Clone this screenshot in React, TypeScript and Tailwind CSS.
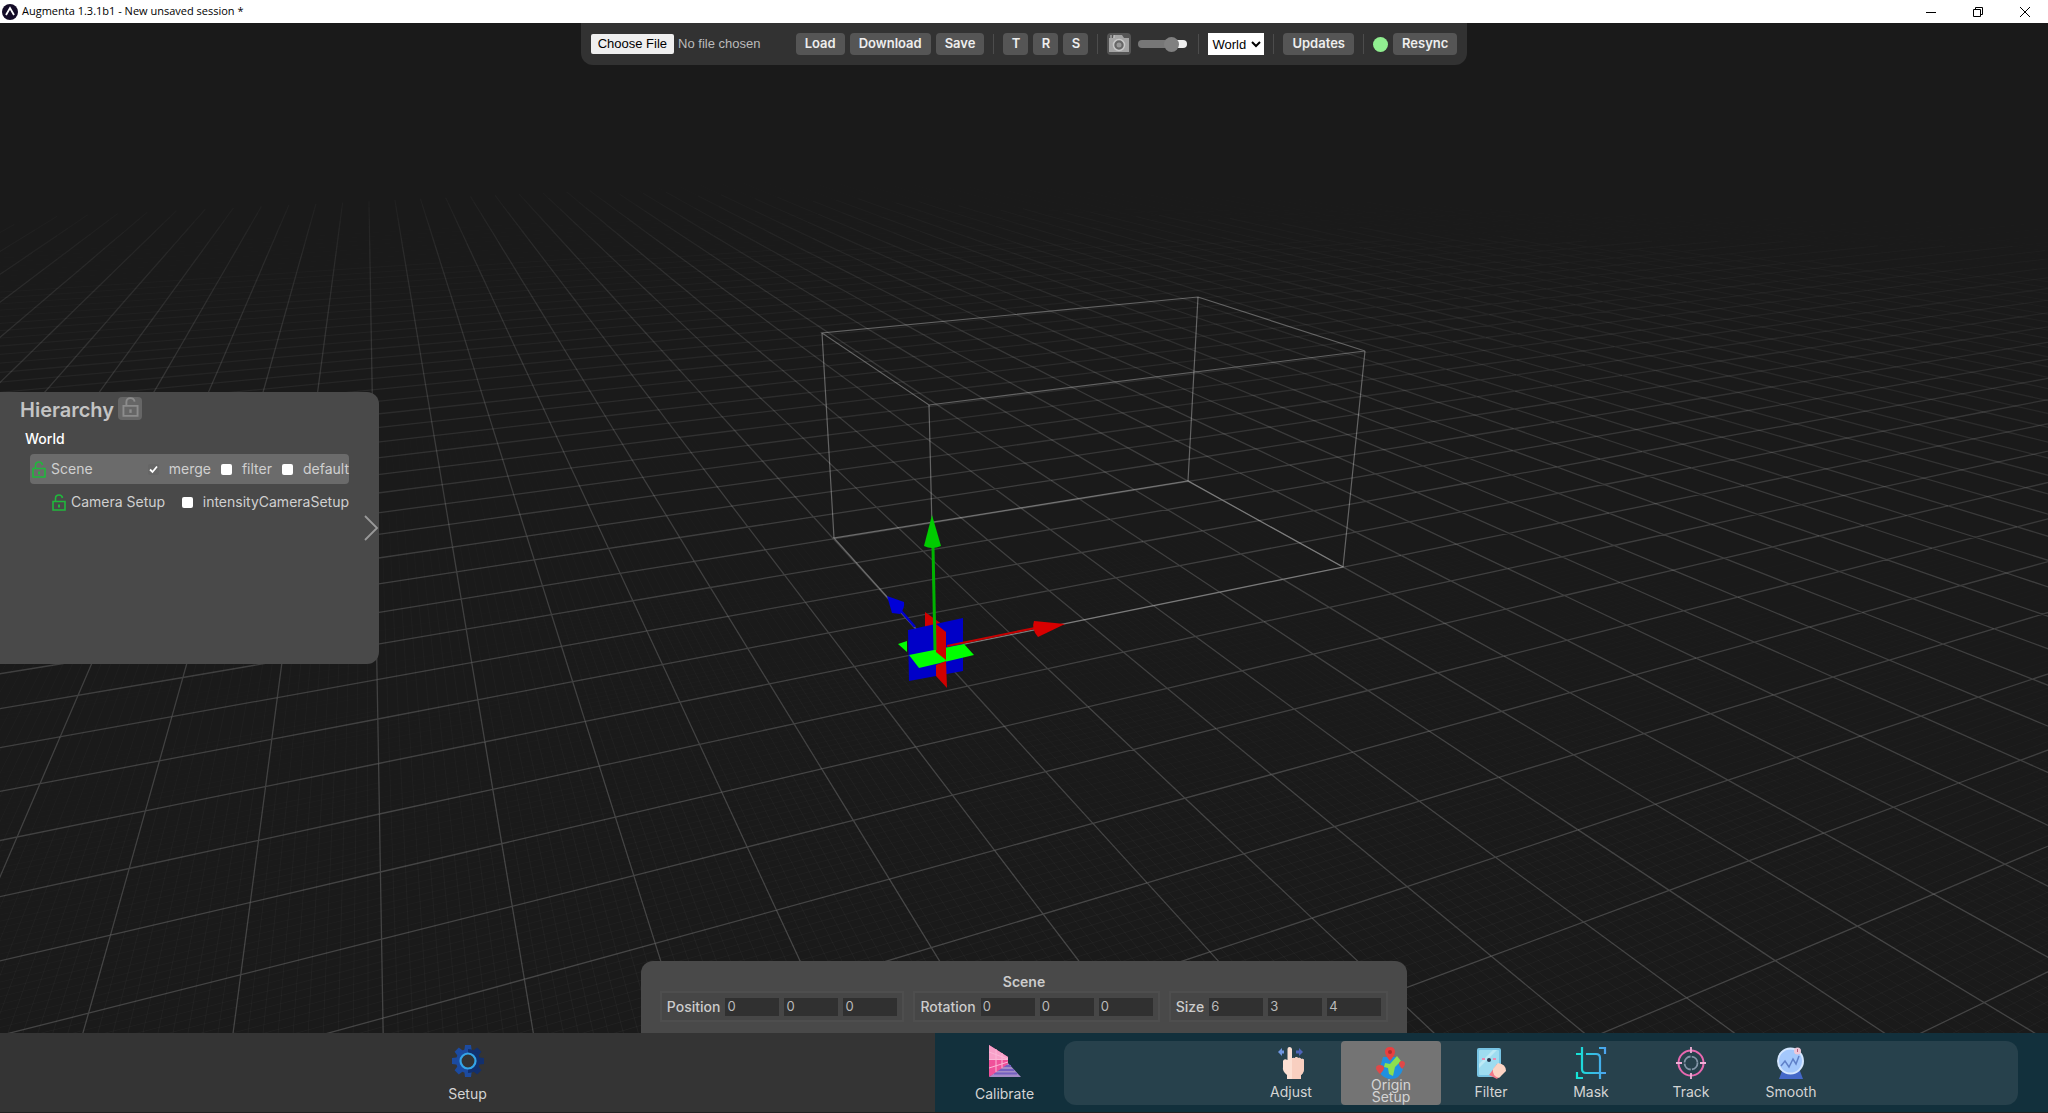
import { useState } from 'react';
import type { ReactNode } from 'react';

// Ground plane projection: x/z in metres -> screen, with the horizon at y = 26
const HORIZON = 26;
const CENTER = 1024;
const depth = (x: number, z: number) => 0.001602 + 0.000041 * x + 0.000087 * z;
const side = (x: number, z: number) => -0.1426 + 0.1221 * x - 0.05725 * z;

const project = (x: number, z: number) => {
  const q = depth(x, z);
  return { q, px: CENTER + side(x, z) / q, py: HORIZON + 1 / q };
};

const distance = (x: number, z: number) => {
  const f = 1398 * depth(x, z) - 0.3876;
  return Math.hypot(side(x, z), f) / 0.13486;
};

const LEVELS = 24;

const buildGrid = (unit: number, extent: number, chunk: number, fade: number, softGap: number) => {
  const levels: string[] = Array(LEVELS).fill('');
  const count = Math.round(extent / unit);
  for (const dir of [0, 1]) {
    for (let i = -count; i <= count; i++) {
      const c = i * unit;
      if (unit < 1 && i % 10 === 0) continue;
      for (let t = -extent; t < extent; t += chunk) {
        const at = (v: number, off = 0) => (dir ? project(v, c + off) : project(c + off, v));
        let a = at(t);
        let b = at(t + chunk);
        if (b.q < 0.0008) continue;
        if (a.q < 0.0008) a = at(t + (chunk * (0.0008 - a.q)) / (b.q - a.q));
        if (Math.max(a.px, b.px) < -10 || Math.min(a.px, b.px) > 2060) continue;
        if (Math.min(a.py, b.py) > 1050) continue;
        const mid = t + chunk / 2;
        const n = at(mid, unit);
        const m = at(mid);
        const len = Math.hypot(b.px - a.px, b.py - a.py) || 1;
        // screen gap to the neighbouring line, dims lines that get crowded
        const gap = Math.abs((n.px - m.px) * (b.py - a.py) - (n.py - m.py) * (b.px - a.px)) / len;
        const d = dir ? distance(mid, c) : distance(c, mid);
        const o = Math.max(0, 1 - d / fade) * Math.min(1, gap / softGap);
        const level = Math.min(LEVELS - 1, Math.floor(o * LEVELS));
        if (level < 1) continue;
        levels[level] += `M${a.px.toFixed(1)} ${a.py.toFixed(1)}L${b.px.toFixed(1)} ${b.py.toFixed(1)}`;
      }
    }
  }
  return levels;
};

const majorGrid = buildGrid(1, 50, 2, 72, 22);
const minorGrid = buildGrid(0.1, 14, 2, 32, 9);

const Scene = () => (
  <svg className="absolute inset-0 h-full w-full" viewBox="0 23 2048 1010" preserveAspectRatio="xMidYMid slice" fill="none">
    {minorGrid.map((d, i) => d && <path key={i} d={d} stroke="#fff" strokeOpacity={(i / LEVELS) * 0.045} />)}
    {majorGrid.map((d, i) => d && <path key={i} d={d} stroke="#fff" strokeWidth="1.3" strokeOpacity={(i / LEVELS) * 0.22} />)}
    <g stroke="#fff" strokeOpacity="0.32" strokeWidth="1.2">
      <path d="M935 650L1343 567L1188 481L834 538Z" />
      <path d="M929 405L1365 351L1198 297L822 333Z" />
      <path d="M935 650L929 405M1343 567L1365 351M1188 481L1198 297M834 538L822 333" />
    </g>
    {/* transform gizmo */}
    <path d="M925 612V633L946 652V627Z" fill="#d00000" />
    <path d="M908 630L963 618V671L909 681Z" fill="#0000c8" />
    <path d="M898 644L907 641V652Z" fill="#0f0" />
    <path d="M909 655L964 644L974 655L919 668Z" fill="#0f0" />
    <path d="M936 624L946 632V660L936 652Z" fill="#d00000" />
    <path d="M936 665L946 661L947 688L936 676Z" fill="#d00000" />
    <path d="M915 627L901 611" stroke="#0000c8" strokeWidth="2.5" />
    <path d="M887 596L904 602Q905 608 900 614L892 613Z" fill="#0000d8" />
    <path d="M947 646L1035 628" stroke="#c80000" strokeWidth="2" />
    <path d="M1065 624L1034 621Q1031 629 1038 637Z" fill="#d80000" />
    <path d="M935 650L933 546" stroke="#00b400" strokeWidth="3" />
    <path d="M932 515L924 546Q932 550 941 546Z" fill="#00cc00" />
  </svg>
);

const Lock = ({ className }: { className: string }) => (
  <svg className={className} viewBox="0 0 14 17" fill="none" stroke="currentColor" strokeWidth="1.6">
    <path d="M1 7.5H13V16H1ZM3.5 7.5V4.5Q3.5 1 7 1Q10 1 10.5 4" />
    <path d="M7 10.5V13.5" strokeWidth="2" />
  </svg>
);

const GearIcon = () => (
  <svg viewBox="0 0 32 32" className="size-8">
    {[0, 45, 90, 135, 180, 225, 270, 315].map((a) => (
      <path key={a} d="M13 0H19L20 8H12Z" fill={a > 0 && a < 180 ? '#12306e' : '#1c4ba0'} transform={`rotate(${a} 16 16)`} />
    ))}
    <path d="M16 4A12 12 0 0 0 16 28Z" fill="#1c4ba0" />
    <path d="M16 4A12 12 0 0 1 16 28Z" fill="#12306e" />
    <circle cx="16" cy="16" r="7.5" fill="#333" stroke="#35a5e8" strokeWidth="2.2" />
  </svg>
);

const CalibrateIcon = () => (
  <svg viewBox="0 0 32 32" className="size-8">
    <path d="M0 32L18 17L32 32Z" fill="#a48cc8" />
    <path d="M8 25H25M13 21H22M5 28.5H28" stroke="#7560c0" strokeWidth="1.8" />
    <path d="M0 0L19 12V19L0 32Z" fill="#f0509a" />
    <path d="M0 0L19 12V15L0 14Z" fill="#f8a0c8" />
    <path d="M0 7L19 14M0 14.5H19M0 23L19 17M7 4V27M13 8V23" stroke="#fbb6d6" strokeWidth="1" />
  </svg>
);

const AdjustIcon = () => (
  <svg viewBox="0 0 32 32" className="size-8">
    <path d="M3 5L7 1V3.5H9V6.5H7V9Z" fill="#6f96e0" />
    <path d="M28 5L24 1V3.5H21V6.5H24V9Z" fill="#4f64b8" />
    <path d="M12.5 2Q12.5 0 14.5 0T17 2V12Q18 10 20 11Q21 9 23 11Q25 10 26 12Q29 11 29 14V21Q29 26 26 28V32H12V28Q7 24 8 20V14Q9 11 12.5 13Z" fill="#fce0d4" />
    <path d="M17 11V32H26V28Q29 26 29 21V14Q29 11 26 12Q25 10 23 11Q21 9 20 11Z" fill="#f8cfc0" />
  </svg>
);

const OriginIcon = () => (
  <svg viewBox="0 0 32 32" className="size-8">
    <path d="M8 10H22L28 22Q25 32 16 32Q8 32 4 24Z" fill="#2090e0" />
    <path d="M10 16L15 17L22 9L26 14L20 20L18 29L14 27L13 21L9 20Z" fill="#8be04e" />
    <path d="M15 14Q10 8 10 5Q10 0 15 0T20 5Q20 8 15 14Z" fill="#e84040" />
    <circle cx="15" cy="5" r="2" fill="#b02c30" />
    <path d="M5 27Q1 23 1 21Q1 18 5 18T9 21Q9 23 5 27ZM27 22Q24 19 24 17Q24 14 27 14T30 17Q30 19 27 22Z" fill="#e04848" />
  </svg>
);

const FilterIcon = () => (
  <svg viewBox="0 0 32 32" className="size-8">
    <rect x="2" y="1" width="24" height="29" rx="2" fill="#78c4e4" />
    <rect x="4" y="3" width="20" height="25" rx="1" fill="#9edcf0" />
    <path d="M4 17L18 3H22L4 21Z" fill="#bdeaf6" />
    <circle cx="14" cy="13" r="2" fill="#263850" />
    <path d="M7 12H10M18 12H21" stroke="#e88cb4" strokeWidth="2" />
    <path d="M14 28L22 17L30 23L22 32Z" fill="#f07888" />
    <path d="M18 22L23 16Q31 17 31 24L24 31Q17 29 18 22Z" fill="#fcd4c4" />
  </svg>
);

const MaskIcon = () => (
  <svg viewBox="0 0 32 32" className="size-8" fill="none" strokeWidth="2.2">
    <defs>
      <linearGradient id="mask" gradientUnits="userSpaceOnUse" x1="0" y1="0" x2="32" y2="0">
        <stop stopColor="#10e8d4" />
        <stop offset="1" stopColor="#50a0f0" />
      </linearGradient>
    </defs>
    <path d="M7 0V22Q7 26 11 26H31M1 7H7M11 7H21Q25 7 25 11V32M24 1H30V7M2 25V31H8" stroke="url(#mask)" />
  </svg>
);

const TrackIcon = () => (
  <svg viewBox="0 0 32 32" className="size-8" fill="none">
    <circle cx="16" cy="16" r="12.5" stroke="#e868b0" strokeWidth="2" />
    <circle cx="16" cy="16" r="6.5" stroke="#8496a8" strokeWidth="1.8" strokeDasharray="9 1.2" />
    <path d="M16 0V6M16 26V32M1 16H7M25 16H31" stroke="#f0b0d8" strokeWidth="1.8" />
  </svg>
);

const SmoothIcon = () => (
  <svg viewBox="0 0 32 32" className="size-8">
    <path d="M7 24H25L28 32H4Z" fill="#4468c8" />
    <circle cx="15.5" cy="14" r="12.5" fill="#a4c8fc" stroke="#d4e6fe" strokeWidth="2" />
    <path d="M6 19L10 14L14 20L18 12L21 17L24 9" fill="none" stroke="#6080c8" strokeWidth="1.5" />
    <circle cx="22.5" cy="4" r="3.5" fill="#f0c8d8" />
    <path d="M22.5 2V5" stroke="#b86080" />
  </svg>
);

const Separator = () => <span className="mx-1 h-5 w-px bg-[#4c4c4c]" />;

const ToolButton = ({ children, className = 'px-[9px]' }: { children: ReactNode; className?: string }) => (
  <button className={`h-[22px] rounded bg-[#555] text-[13px] font-semibold text-[#eee] ${className}`}>{children}</button>
);

const Toolbar = () => {
  const [opacity, setOpacity] = useState(75);

  return (
    <div className="flex h-[42px] items-center gap-[5px] rounded-b-xl bg-[#323232] px-2.5">
      <input
        type="file"
        aria-label="Session file"
        className="mr-0.5 w-[198px] font-['Liberation_Sans',sans-serif] text-[13px] text-[#bbb] file:mr-1 file:h-5 file:rounded-xs file:bg-[#efefef] file:px-[7px] file:text-[13px] file:text-black"
      />
      <ToolButton>Load</ToolButton>
      <ToolButton>Download</ToolButton>
      <ToolButton>Save</ToolButton>
      <Separator />
      <ToolButton className="w-[25px]">T</ToolButton>
      <ToolButton className="w-[25px]">R</ToolButton>
      <ToolButton className="w-[25px]">S</ToolButton>
      <Separator />
      <button aria-label="Camera" className="flex h-[22px] w-6 items-center justify-center rounded bg-[#555]">
        <svg viewBox="0 0 22 20" className="h-5 w-[22px]">
          <path d="M1 4H5L6 1H14L16 4H21V18H1Z" fill="#a4a4a4" />
          <path d="M3 1V4M6 1V4" stroke="#ccc" />
          <circle cx="11" cy="11" r="5.5" fill="#666" stroke="#c8c8c8" strokeWidth="1.5" />
          <circle cx="11" cy="11" r="2.5" fill="#999" />
        </svg>
      </button>
      <input
        type="range"
        aria-label="Camera opacity"
        value={opacity}
        onChange={(e) => setOpacity(Number(e.target.value))}
        className="mx-0.5 h-2 w-[49px] appearance-none rounded-full bg-linear-to-r from-[#777] from-75% to-[#efefef] to-75% [&::-webkit-slider-thumb]:size-[15px] [&::-webkit-slider-thumb]:appearance-none [&::-webkit-slider-thumb]:rounded-full [&::-webkit-slider-thumb]:bg-[#808080]"
      />
      <Separator />
      <select aria-label="Space" className="h-[22px] w-14 bg-white font-['Liberation_Sans',sans-serif] text-[13px] text-black">
        <option>World</option>
        <option>Local</option>
      </select>
      <Separator />
      <ToolButton>Updates</ToolButton>
      <Separator />
      <span className="size-[15px] rounded-full bg-[#90ee90]" />
      <ToolButton>Resync</ToolButton>
    </div>
  );
};

const Check = ({ id, label, checked = false }: { id: string; label: string; checked?: boolean }) => (
  <label htmlFor={id} className="flex items-center gap-2.5 whitespace-nowrap">
    <span className="relative flex">
      <input id={id} type="checkbox" defaultChecked={checked} className="peer size-[11px] appearance-none rounded-xs bg-white checked:bg-[#666]" />
      <svg viewBox="0 0 11 11" className="pointer-events-none absolute inset-0 hidden size-[11px] peer-checked:block">
        <path d="M2 5.5L4.5 8L9 2.5" fill="none" stroke="#fff" strokeWidth="1.8" />
      </svg>
    </span>
    {label}
  </label>
);

const Hierarchy = () => (
  <section className="flex h-[272px] w-[379px] items-center rounded-r-xl bg-[#494949] text-sm text-[#d0d0d0]">
    <div className="h-full w-[349px] pt-[5px] pl-5">
      <div className="flex h-[26px] items-center gap-1">
        <h2 className="text-xl font-semibold text-[#c4c4c4]">Hierarchy</h2>
        <button aria-label="Lock all" className="mb-1 flex h-[23px] w-6 justify-center rounded bg-[#666] text-[#8c8c8c]">
          <Lock className="h-5 w-[17px]" />
        </button>
      </div>
      <div className="flex h-[31px] items-center pl-[5px] font-medium text-white">World</div>
      <div className="ml-2.5 flex h-[30px] items-center rounded bg-[#6b6b6b] pl-0.5">
        <Lock className="mr-[5px] h-[17px] w-3.5 text-[#20b83c]" />
        <span className="grow">Scene</span>
        <div className="flex gap-2.5">
          <Check id="merge" label="merge" checked />
          <Check id="filter" label="filter" />
          <Check id="default" label="default" />
        </div>
      </div>
      <div className="mt-[3px] ml-[30px] flex h-[30px] items-center pl-0.5">
        <Lock className="mr-[5px] h-[17px] w-3.5 text-[#20b83c]" />
        <span className="grow whitespace-nowrap">Camera Setup</span>
        <Check id="intensity" label="intensityCameraSetup" />
      </div>
    </div>
    <button aria-label="Expand" className="ml-auto">
      <svg viewBox="0 0 16 26" className="h-[26px] w-4" fill="none" stroke="#999" strokeWidth="1.8">
        <path d="M2 1L14 13L2 25" />
      </svg>
    </button>
  </section>
);

const fields = [
  { name: 'Position', values: [0, 0, 0] },
  { name: 'Rotation', values: [0, 0, 0] },
  { name: 'Size', values: [6, 3, 4] },
];

const Inspector = () => (
  <section className="flex h-[72px] w-[766px] flex-col items-center rounded-t-xl bg-[#494949] pt-3 text-[#ccc]">
    <h3 className="text-sm leading-[18px] font-semibold">Scene</h3>
    <div className="flex gap-[9px]">
      {fields.map((field) => (
        <div key={field.name} role="group" aria-label={field.name} className="flex h-[31px] items-center gap-[5px] border-2 border-[#4e4e4e] bg-[#464646] px-[5px]">
          <span className="text-sm font-medium">{field.name}</span>
          {field.values.map((value, i) => (
            <input
              key={i}
              aria-label={`${field.name} ${'XYZ'[i]}`}
              defaultValue={value}
              className="h-[18px] w-[54px] bg-[#303030] px-0.5 text-[13px] text-[#bbb]"
            />
          ))}
        </div>
      ))}
    </div>
  </section>
);

const tabs = [
  { name: 'Adjust', icon: <AdjustIcon /> },
  { name: 'Origin Setup', icon: <OriginIcon /> },
  { name: 'Filter', icon: <FilterIcon /> },
  { name: 'Mask', icon: <MaskIcon /> },
  { name: 'Track', icon: <TrackIcon /> },
  { name: 'Smooth', icon: <SmoothIcon /> },
];

const BottomBar = () => {
  const [active, setActive] = useState('Origin Setup');

  return (
    <nav className="flex h-20 border-b border-[#202020] text-sm text-[#d4d4d4]">
      <button className="flex w-[935px] shrink flex-col items-center bg-[#343434] pt-3">
        <GearIcon />
        <span className="mt-2 leading-[18px]">Setup</span>
      </button>
      <div className="flex grow items-start bg-[#12303c] pr-[30px]">
        <button className="flex w-[129px] flex-col items-center pt-3 pl-2.5">
          <CalibrateIcon />
          <span className="mt-2 leading-[18px]">Calibrate</span>
        </button>
        <div className="mt-2 flex h-16 grow justify-center rounded-xl bg-[#27414c]">
          {tabs.map((tab) => (
            <button
              key={tab.name}
              onClick={() => setActive(tab.name)}
              className={`flex w-[100px] flex-col items-center rounded pt-1.5 ${active === tab.name ? 'bg-[#747474]' : ''}`}
            >
              {tab.icon}
              {tab.name.includes(' ') ? (
                <span className="w-12 leading-3">{tab.name}</span>
              ) : (
                <span className="mt-1 leading-[18px]">{tab.name}</span>
              )}
            </button>
          ))}
        </div>
      </div>
    </nav>
  );
};

const TitleBar = () => (
  <header className="flex h-[23px] items-center bg-white pl-0.5 font-['Open_Sans',sans-serif] text-[11px] text-black">
    <svg viewBox="0 0 16 16" className="mr-1 size-4" fill="none">
      <circle cx="8" cy="8" r="8" fill="#140c28" />
      <path d="M4 11L8 4L12 11" stroke="#fff" strokeWidth="1.8" />
    </svg>
    <h1 className="grow">Augmenta 1.3.1b1 - New unsaved session *</h1>
    <div className="flex">
      <button aria-label="Minimize" className="flex h-[23px] w-[47px] items-center justify-center">
        <svg viewBox="0 0 10 10" className="size-2.5" stroke="#000"><path d="M0 5.5H10" /></svg>
      </button>
      <button aria-label="Restore" className="flex h-[23px] w-[47px] items-center justify-center">
        <svg viewBox="0 0 10 10" className="size-2.5" fill="none" stroke="#000"><path d="M.5 2.5H7.5V9.5H.5ZM2.5 2.5V.5H9.5V7.5H7.5" /></svg>
      </button>
      <button aria-label="Close" className="flex h-[23px] w-[47px] items-center justify-center">
        <svg viewBox="0 0 10 10" className="size-2.5" stroke="#000"><path d="M0 0L10 10M10 0L0 10" /></svg>
      </button>
    </div>
  </header>
);

const App = () => (
  <div className="flex h-screen flex-col bg-[#1a1a1a] font-['Inter',sans-serif]">
    <TitleBar />
    <main className="relative grow overflow-hidden">
      <Scene />
      <div className="relative grid h-full grid-rows-[1fr_auto_1fr] justify-items-center">
        <Toolbar />
        <div className="justify-self-start">
          <Hierarchy />
        </div>
        <div className="self-end">
          <Inspector />
        </div>
      </div>
    </main>
    <BottomBar />
  </div>
);

export default App;
